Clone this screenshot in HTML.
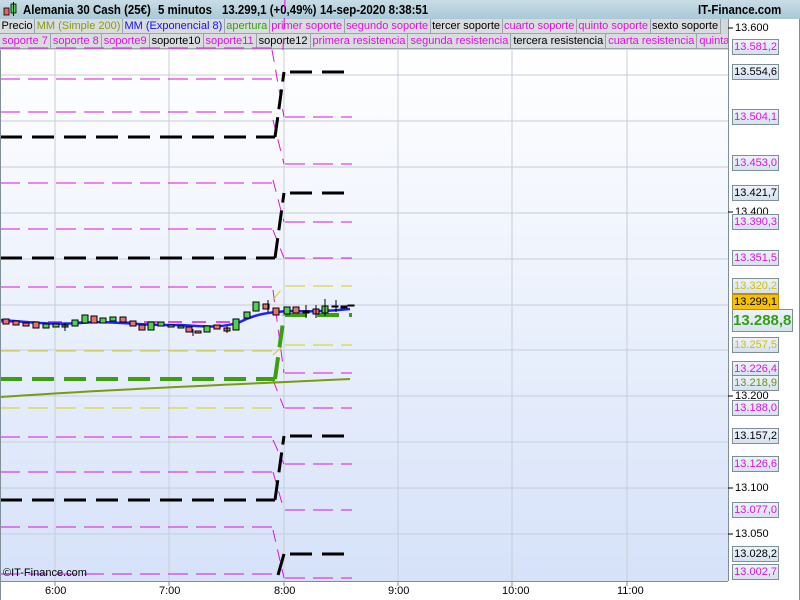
<!DOCTYPE html>
<html><head><meta charset="utf-8"><style>
body{margin:0;width:800px;height:600px;overflow:hidden;font-family:"Liberation Sans",sans-serif;background:#fff;position:relative}
#hdr{position:absolute;left:0;top:0;width:800px;height:19px;background:linear-gradient(#c9dde6,#a9c8d6);font-weight:bold;font-size:13px;line-height:19px}
#hdr span{position:absolute;white-space:nowrap;transform:scaleX(.88);transform-origin:0 0}
.leg{position:absolute;left:0;height:15px;font-size:11px;line-height:15px;white-space:nowrap;background:#d3d7da;width:728px;overflow:hidden}
.leg span{display:inline-block;border:1px solid #9aa4aa;border-top:none;border-left:none;padding:0 1.5px;height:14px;line-height:14px;background:#d9dcde}
.leg.r2 span{padding:0 2px}
.lb{position:absolute;left:732px;width:44px;height:14px;border:1px solid #7f8f98;background:linear-gradient(#eef3fb,#d6e1ef);font-size:11px;line-height:14px;text-align:right;padding-right:1px}
.pl{position:absolute;left:735px;font-size:11px;line-height:12px}
.tm{position:absolute;top:585px;font-size:11px}
</style></head><body>
<div id="hdr"><svg style="position:absolute;left:3px;top:2px" width="14" height="16"><rect x="1" y="6" width="5" height="7" fill="#e86060" stroke="#000" stroke-width=".8"/><rect x="8" y="2" width="5" height="9" fill="#50d050" stroke="#000" stroke-width=".8"/><line x1="10.5" y1="0" x2="10.5" y2="14" stroke="#000"/></svg>
<span style="left:23px">Alemania 30 Cash (25€)</span><span style="left:158px">5 minutos</span><span style="left:222px">13.299,1 (+0,49%)</span><span style="left:320px">14-sep-2020 8:38:51</span>
<span style="left:698px">IT-Finance.com</span></div>
<div class="leg" style="top:19px"><span style="color:#000">Precio</span><span style="color:#8a9a10">MM (Simple 200)</span><span style="color:#1010ff">MM (Exponencial 8)</span><span style="color:#30a010">apertura</span><span style="color:#e010e0">primer soporte</span><span style="color:#e010e0">segundo soporte</span><span>tercer soporte</span><span style="color:#e010e0">cuarto soporte</span><span style="color:#e010e0">quinto soporte</span><span>sexto soporte</span></div>
<div class="leg r2" style="top:34px;height:16px"><span style="color:#e010e0">soporte 7</span><span style="color:#e010e0">soporte 8</span><span style="color:#e010e0">soporte9</span><span>soporte10</span><span style="color:#e010e0">soporte11</span><span>soporte12</span><span style="color:#e010e0">primera resistencia</span><span style="color:#e010e0">segunda resistencia</span><span>tercera resistencia</span><span style="color:#e010e0">cuarta resistencia</span><span style="color:#e010e0">quinta resistencia</span></div>
<svg style="position:absolute;left:0;top:0" width="800" height="600">
<defs><linearGradient id="bg" x1="0" y1="0" x2="0" y2="1"><stop offset="0" stop-color="#ffffff"/><stop offset="1" stop-color="#d6e2f9"/></linearGradient></defs>
<rect x="0" y="50" width="728" height="531" fill="url(#bg)"/>
<g stroke="#c8ccd8" stroke-width="1">
<line x1="0" y1="75" x2="728" y2="75"/><line x1="0" y1="121" x2="728" y2="121"/><line x1="0" y1="167" x2="728" y2="167"/><line x1="0" y1="213" x2="728" y2="213"/><line x1="0" y1="259" x2="728" y2="259"/><line x1="0" y1="305" x2="728" y2="305"/><line x1="0" y1="350" x2="728" y2="350"/><line x1="0" y1="396" x2="728" y2="396"/><line x1="0" y1="442" x2="728" y2="442"/><line x1="0" y1="488" x2="728" y2="488"/><line x1="0" y1="534" x2="728" y2="534"/>
<line x1="55" y1="50" x2="55" y2="581"/><line x1="169" y1="50" x2="169" y2="581"/><line x1="284" y1="50" x2="284" y2="581"/><line x1="398" y1="50" x2="398" y2="581"/><line x1="512" y1="50" x2="512" y2="581"/><line x1="627" y1="50" x2="627" y2="581"/>
</g>
<g fill="none">
<g stroke="#e010e0" stroke-width="1" stroke-dasharray="20,8">
<path d="M0 48H275M0 79H275M0 112H275M0 183H275M0 229H275M0 287H275M0 437H275M0 472H275M0 527H275M0 574H275"/>
<path d="M285 117H352M285 164H352M285 222H352M285 258H352M285 373H352M285 408H352M285 464H352M285 510H352M285 578H352"/>
<path d="M272 50L284 117M273 120L284 164M273 180L284 222M273 230L284 258M273 290L284 373M273 380L284 408M273 440L284 464M273 472L284 510M273 530L284 578M283 50L285 0" stroke-dasharray="12,8"/>
</g>
<g stroke="#d8d000" stroke-width="1" stroke-dasharray="20,8">
<path d="M0 351H275M0 408H275M285 286H352M285 345H352"/>
<path d="M273 300L284 286M273 355L284 345" stroke-dasharray="12,8"/>
</g>
<g stroke="#000" stroke-width="3" stroke-dasharray="22,10">
<path d="M0 137H275M0 258H275M0 500H275M290 72H348M290 193H348M290 436H348M290 554H348"/>
<path d="M275 137L284 72M275 258L284 193M275 500L284 436" stroke-dasharray="20,8"/>
<path d="M278 575L284 554" stroke-dasharray="none"/>
</g>
<g stroke="#3aa010" stroke-width="4" stroke-dasharray="22,10">
<path d="M0 379H275M285 315H352M275 379L284 315"/>
</g>
<path d="M0 397C100 390 200 386 350 379" stroke="#7a9a10" stroke-width="2"/>
<g stroke="#e010e0" stroke-width="1.5" stroke-dasharray="14,10"><path d="M0 322H230"/></g>
<path d="M0 320C30 322 50 325 80 323C110 320 140 326 180 325C200 326 220 329 240 322C255 314 270 312 290 311C310 312 330 311 350 309" stroke="#2020ff" stroke-width="2.5"/>
</g>
<g stroke="#000" stroke-width="1">
<rect x="3" y="319" width="6" height="5" fill="#e87070"/><rect x="13" y="321" width="6" height="4" fill="#e87070"/><rect x="23" y="323" width="6" height="3" fill="#e87070"/><rect x="33" y="322" width="6" height="6" fill="#e87070"/><rect x="43" y="324" width="6" height="4" fill="#50d050"/><rect x="53" y="324" width="6" height="3" fill="#50d050"/><rect x="62" y="325" width="6" height="2" fill="#50d050"/><rect x="72" y="320" width="6" height="6" fill="#50d050"/><rect x="82" y="315" width="6" height="8" fill="#50d050"/><rect x="91" y="316" width="6" height="7" fill="#e87070"/><rect x="100" y="318" width="6" height="5" fill="#50d050"/><rect x="110" y="317" width="6" height="4" fill="#50d050"/><rect x="120" y="317" width="6" height="5" fill="#e87070"/><rect x="130" y="321" width="6" height="5" fill="#e87070"/><rect x="139" y="325" width="6" height="5" fill="#e87070"/><rect x="148" y="322" width="6" height="8" fill="#50d050"/><rect x="158" y="322" width="6" height="4" fill="#50d050"/><rect x="168" y="325" width="6" height="2" fill="#50d050"/><rect x="178" y="326" width="6" height="2" fill="#50d050"/><rect x="186" y="327" width="6" height="5" fill="#e87070"/><rect x="195" y="331" width="6" height="2" fill="#e87070"/><rect x="204" y="326" width="6" height="6" fill="#50d050"/><rect x="214" y="325" width="6" height="4" fill="#e87070"/><rect x="224" y="328" width="6" height="3" fill="#e87070"/><rect x="233" y="319" width="6" height="11" fill="#50d050"/><rect x="244" y="312" width="6" height="6" fill="#50d050"/><rect x="253" y="302" width="6" height="9" fill="#50d050"/><rect x="263" y="304" width="6" height="5" fill="#e87070"/><rect x="273" y="308" width="6" height="7" fill="#e87070"/><rect x="284" y="307" width="6" height="7" fill="#50d050"/><rect x="293" y="307" width="6" height="6" fill="#e87070"/><rect x="303" y="311" width="6" height="2" fill="#000"/><rect x="313" y="309" width="6" height="5" fill="#e87070"/><rect x="322" y="306" width="6" height="7" fill="#50d050"/><rect x="332" y="306" width="6" height="1" fill="#000"/><rect x="341" y="306" width="6" height="2" fill="#000"/><rect x="348" y="305" width="6" height="1" fill="#000"/>
<path d="M306 305V318M336 300V312M325 299V316M268 300V312M316 305V318M65 323V331M193 329V336M227 326V333"/>
</g>
<rect x="0" y="581" width="800" height="19" fill="#fff"/>
<line x1="0" y1="581.5" x2="728" y2="581.5" stroke="#7f8f98"/>
<line x1="728.5" y1="19" x2="728.5" y2="581" stroke="#7f8f98"/>
<line x1="0.5" y1="50" x2="0.5" y2="600" stroke="#7f8f98"/>
<line x1="799.5" y1="19" x2="799.5" y2="600" stroke="#7f8f98"/>
<g stroke="#7f8f98"><path d="M55 581V586M169 581V586M284 581V586M398 581V586M512 581V586M627 581V586"/></g>
<g stroke="#000"><path d="M728 28H733M728 212H733M728 396H733M728 488H733M728 534H733"/></g>
</svg>
<div style="position:absolute;left:3px;top:567px;font-size:11px">©IT-Finance.com</div>
<div class="tm" style="left:45px">6:00</div><div class="tm" style="left:159px">7:00</div><div class="tm" style="left:274px">8:00</div><div class="tm" style="left:388px">9:00</div><div class="tm" style="left:502px">10:00</div><div class="tm" style="left:617px">11:00</div>
<div class="pl" style="top:22px">13.600</div><div class="pl" style="top:206px">13.400</div><div class="pl" style="top:390px">13.200</div><div class="pl" style="top:482px">13.100</div><div class="pl" style="top:528px">13.050</div>
<div class="lb" style="top:39px;color:#e010e0">13.581,2</div>
<div class="lb" style="top:64px">13.554,6</div>
<div class="lb" style="top:109px;color:#e010e0">13.504,1</div>
<div class="lb" style="top:155px;color:#e010e0">13.453,0</div>
<div class="lb" style="top:185px">13.421,7</div>
<div class="lb" style="top:214px;color:#e010e0">13.390,3</div>
<div class="lb" style="top:250px;color:#e010e0">13.351,5</div>
<div class="lb" style="top:278px;color:#d0c000">13.320,2</div>
<div class="lb" style="top:294px;background:#f8c000;border-color:#c09000">13.299,1</div>
<div class="lb" style="top:309px;width:58px;height:21px;line-height:21px;font-size:15px;font-weight:bold;color:#30a010;padding-right:1px;text-align:center">13.288,8</div>
<div class="lb" style="top:337px;color:#d0c000">13.257,5</div>
<div class="lb" style="top:361px;color:#e010e0">13.226,4</div>
<div class="lb" style="top:375px;color:#6a9010">13.218,9</div>
<div class="lb" style="top:400px;color:#e010e0">13.188,0</div>
<div class="lb" style="top:428px">13.157,2</div>
<div class="lb" style="top:456px;color:#e010e0">13.126,6</div>
<div class="lb" style="top:502px;color:#e010e0">13.077,0</div>
<div class="lb" style="top:546px">13.028,2</div>
<div class="lb" style="top:564px;color:#e010e0">13.002,7</div>
</body></html>
